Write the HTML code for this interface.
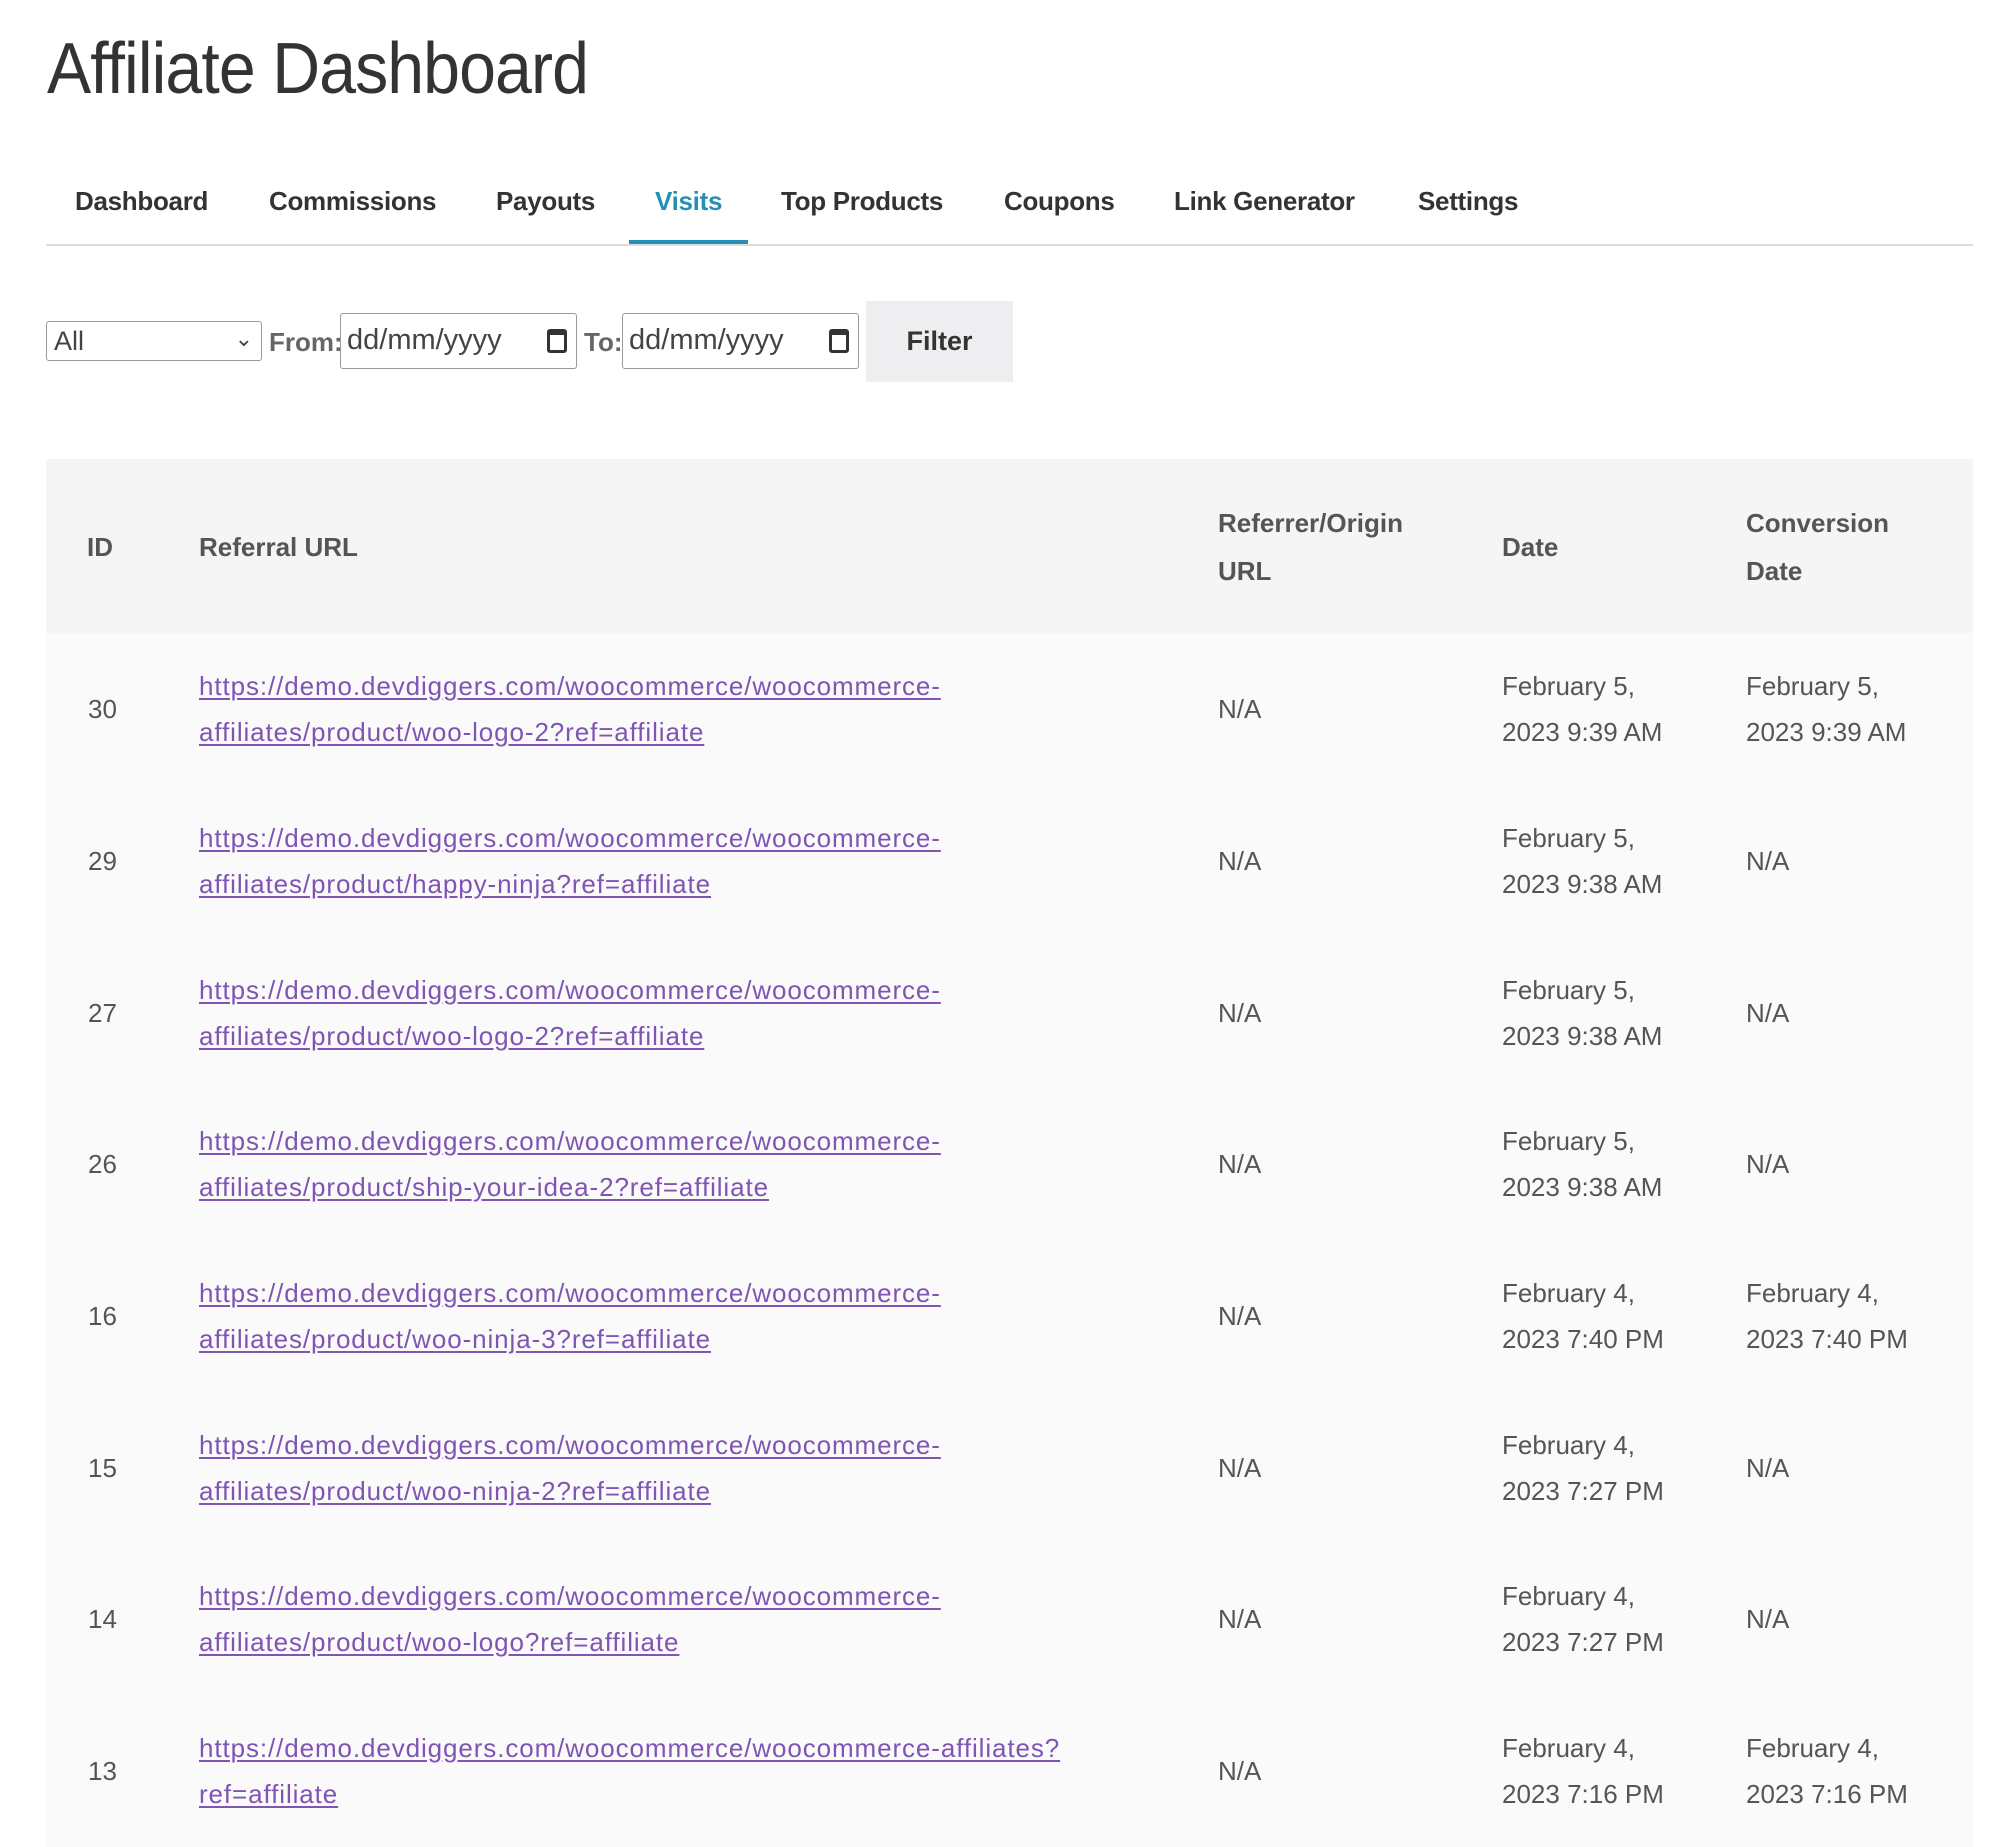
<!DOCTYPE html>
<html><head><meta charset="utf-8"><style>
*{margin:0;padding:0;box-sizing:border-box}
body{width:2006px;height:1821px;overflow:hidden;background:#fff;font-family:"Liberation Sans",sans-serif;color:#555;position:relative}
.a{position:absolute;white-space:nowrap}
h1{position:absolute;left:47px;top:28px;font-weight:normal;font-size:72px;color:#333;transform:scaleX(0.92);transform-origin:left top;letter-spacing:-1px;white-space:nowrap}
.tab{position:absolute;top:186px;font-size:26px;font-weight:bold;color:#333;line-height:30px;letter-spacing:-0.3px}
.inp{position:absolute;border:1px solid #999;border-radius:3px;background:#fff;font-size:29px;color:#444}
.cal{position:absolute;width:20px;height:24px;border:3px solid #333;border-top-width:6px;border-radius:3px}
.row{position:absolute;left:46px;width:1927px;height:152px;background:#fafafa}
.c{position:absolute;font-size:26px;line-height:46px;color:#555;white-space:nowrap}
.c a{color:#7f54b3;text-decoration:underline;text-underline-offset:3px;letter-spacing:0.9px}
.h{position:absolute;font-size:26px;line-height:48px;font-weight:bold;color:#555;white-space:nowrap}
</style></head><body>
<h1>Affiliate Dashboard</h1>
<div class="tab" style="left:75px">Dashboard</div>
<div class="tab" style="left:269px">Commissions</div>
<div class="tab" style="left:496px">Payouts</div>
<div class="tab" style="left:655px;color:#2590b5">Visits</div>
<div class="tab" style="left:781px">Top Products</div>
<div class="tab" style="left:1004px">Coupons</div>
<div class="tab" style="left:1174px">Link Generator</div>
<div class="tab" style="left:1418px">Settings</div>
<div class="a" style="left:46px;top:244px;width:1927px;height:2px;background:#ddd"></div>
<div class="a" style="left:629px;top:240px;width:119px;height:4px;background:#2590b5"></div>

<div class="inp" style="left:46px;top:321px;width:216px;height:40px;font-size:27px;padding:4px 0 0 7px">All<span style="position:absolute;right:8px;top:4px;font-size:22px">&#8964;</span></div>
<div class="a" style="left:269px;top:327px;font-size:26px;font-weight:bold;color:#666">From:</div>
<div class="inp" style="left:340px;top:313px;width:237px;height:56px;padding:10px 0 0 6px">dd/mm/yyyy<div class="cal" style="left:206px;top:15px"></div></div>
<div class="a" style="left:584px;top:327px;font-size:26px;font-weight:bold;color:#666">To:</div>
<div class="inp" style="left:622px;top:313px;width:237px;height:56px;padding:10px 0 0 6px">dd/mm/yyyy<div class="cal" style="left:206px;top:15px"></div></div>
<div class="a" style="left:866px;top:301px;width:147px;height:81px;background:#eeeef0;font-size:27px;font-weight:bold;color:#333;text-align:center;line-height:81px">Filter</div>

<div class="a" style="left:46px;top:459px;width:1927px;height:174px;background:#f5f5f5"></div>
<div class="h" style="left:87px;top:523px">ID</div>
<div class="h" style="left:199px;top:523px">Referral URL</div>
<div class="h" style="left:1218px;top:499px">Referrer/Origin<br>URL</div>
<div class="h" style="left:1502px;top:523px">Date</div>
<div class="h" style="left:1746px;top:499px">Conversion<br>Date</div>

<div class="row" style="top:633px"></div>
<div class="c" style="left:88px;top:686px">30</div>
<div class="c" style="left:199px;top:663px"><a>https://demo.devdiggers.com/woocommerce/woocommerce-</a><br><a>affiliates/product/woo-logo-2?ref=affiliate</a></div>
<div class="c" style="left:1218px;top:686px">N/A</div>
<div class="c" style="left:1502px;top:663px">February 5,<br>2023 9:39 AM</div>
<div class="c" style="left:1746px;top:663px">February 5,<br>2023 9:39 AM</div>

<div class="row" style="top:785px"></div>
<div class="c" style="left:88px;top:838px">29</div>
<div class="c" style="left:199px;top:815px"><a>https://demo.devdiggers.com/woocommerce/woocommerce-</a><br><a>affiliates/product/happy-ninja?ref=affiliate</a></div>
<div class="c" style="left:1218px;top:838px">N/A</div>
<div class="c" style="left:1502px;top:815px">February 5,<br>2023 9:38 AM</div>
<div class="c" style="left:1746px;top:838px">N/A</div>

<div class="row" style="top:937px"></div>
<div class="c" style="left:88px;top:990px">27</div>
<div class="c" style="left:199px;top:967px"><a>https://demo.devdiggers.com/woocommerce/woocommerce-</a><br><a>affiliates/product/woo-logo-2?ref=affiliate</a></div>
<div class="c" style="left:1218px;top:990px">N/A</div>
<div class="c" style="left:1502px;top:967px">February 5,<br>2023 9:38 AM</div>
<div class="c" style="left:1746px;top:990px">N/A</div>

<div class="row" style="top:1088px"></div>
<div class="c" style="left:88px;top:1141px">26</div>
<div class="c" style="left:199px;top:1118px"><a>https://demo.devdiggers.com/woocommerce/woocommerce-</a><br><a>affiliates/product/ship-your-idea-2?ref=affiliate</a></div>
<div class="c" style="left:1218px;top:1141px">N/A</div>
<div class="c" style="left:1502px;top:1118px">February 5,<br>2023 9:38 AM</div>
<div class="c" style="left:1746px;top:1141px">N/A</div>

<div class="row" style="top:1240px"></div>
<div class="c" style="left:88px;top:1293px">16</div>
<div class="c" style="left:199px;top:1270px"><a>https://demo.devdiggers.com/woocommerce/woocommerce-</a><br><a>affiliates/product/woo-ninja-3?ref=affiliate</a></div>
<div class="c" style="left:1218px;top:1293px">N/A</div>
<div class="c" style="left:1502px;top:1270px">February 4,<br>2023 7:40 PM</div>
<div class="c" style="left:1746px;top:1270px">February 4,<br>2023 7:40 PM</div>

<div class="row" style="top:1392px"></div>
<div class="c" style="left:88px;top:1445px">15</div>
<div class="c" style="left:199px;top:1422px"><a>https://demo.devdiggers.com/woocommerce/woocommerce-</a><br><a>affiliates/product/woo-ninja-2?ref=affiliate</a></div>
<div class="c" style="left:1218px;top:1445px">N/A</div>
<div class="c" style="left:1502px;top:1422px">February 4,<br>2023 7:27 PM</div>
<div class="c" style="left:1746px;top:1445px">N/A</div>

<div class="row" style="top:1543px"></div>
<div class="c" style="left:88px;top:1596px">14</div>
<div class="c" style="left:199px;top:1573px"><a>https://demo.devdiggers.com/woocommerce/woocommerce-</a><br><a>affiliates/product/woo-logo?ref=affiliate</a></div>
<div class="c" style="left:1218px;top:1596px">N/A</div>
<div class="c" style="left:1502px;top:1573px">February 4,<br>2023 7:27 PM</div>
<div class="c" style="left:1746px;top:1596px">N/A</div>

<div class="row" style="top:1695px"></div>
<div class="c" style="left:88px;top:1748px">13</div>
<div class="c" style="left:199px;top:1725px"><a>https://demo.devdiggers.com/woocommerce/woocommerce-affiliates?</a><br><a>ref=affiliate</a></div>
<div class="c" style="left:1218px;top:1748px">N/A</div>
<div class="c" style="left:1502px;top:1725px">February 4,<br>2023 7:16 PM</div>
<div class="c" style="left:1746px;top:1725px">February 4,<br>2023 7:16 PM</div>
</body></html>
